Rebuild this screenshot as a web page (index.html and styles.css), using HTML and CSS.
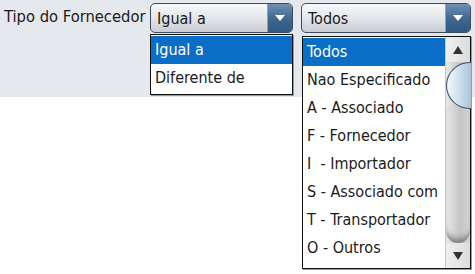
FILE: index.html
```html
<!DOCTYPE html>
<html>
<head>
    <meta name="viewport" content="width=device-width, initial-scale=1.0">
    <title>Tipo do Fornecedor</title>
    <link rel="stylesheet" href="styles.css">
</head>
<body>
    <div class="filter-bar">
        <label class="filter-label">Tipo do Fornecedor</label>
        <div class="combo combo-op">
            <div class="combo-box">
                <span class="combo-value">Igual a</span>
                <span class="combo-btn"></span>
            </div>
            <ul class="combo-list">
                <li class="selected">Igual a</li>
                <li>Diferente de</li>
            </ul>
        </div>
        <div class="combo combo-type">
            <div class="combo-box">
                <span class="combo-value">Todos</span>
                <span class="combo-btn"></span>
            </div>
            <div class="combo-list with-scroll">
                <ul>
                    <li class="selected">Todos</li>
                    <li>Nao Especificado</li>
                    <li>A - Associado</li>
                    <li>F - Fornecedor</li>
                    <li>I &nbsp;- Importador</li>
                    <li>S - Associado com</li>
                    <li>T - Transportador</li>
                    <li>O - Outros</li>
                </ul>
                <div class="scrollbar">
                    <div class="scroll-arrow up"></div>
                    <div class="scroll-thumb"></div>
                    <div class="scroll-track"></div>
                    <div class="scroll-arrow down"></div>
                </div>
            </div>
        </div>
    </div>
</body>
</html>
```

FILE: styles.css
```css
html, body {
    height: 100%;
}
body {
    margin: 0;
    min-height: 274px;
    background: #fff;
    font-family: "DejaVu Sans Condensed", "DejaVu Sans", sans-serif;
    font-stretch: condensed;
    color: #1a1a1a;
}
.filter-bar {
    height: 97px;
    background: #e5e9ee;
    display: flex;
    align-items: flex-start;
    padding: 3px 0 0 4px;
    box-sizing: border-box;
}
.filter-label {
    font-size: 16.4px;
    line-height: 27px;
    width: 146px;
    white-space: nowrap;
}
.combo {
    position: relative;
}
.combo-op {
    width: 143px;
}
.combo-type {
    width: 170px;
    margin-left: 8px;
}
.combo-box {
    height: 30px;
    box-sizing: border-box;
    border: 1px solid #3f4b58;
    border-radius: 5px;
    background: linear-gradient(#f7f8fa, #e3e6ea 50%, #c9cdd3);
    display: flex;
    align-items: center;
    overflow: hidden;
}
.combo-value {
    flex: 1;
    font-size: 16px;
    padding-left: 6px;
}
.combo-btn {
    width: 24px;
    height: 100%;
    background: linear-gradient(#6f8fb3, #3d6690 55%, #2f5882);
    border-left: 1px solid #8fa4ba;
    display: flex;
    align-items: center;
    justify-content: center;
}
.combo-btn::after {
    content: "";
    border-left: 5px solid transparent;
    border-right: 5px solid transparent;
    border-top: 6px solid #fff;
}
.combo-list {
    position: absolute;
    left: 0;
    right: 0;
    top: 31px;
    margin: 0;
    padding: 1px 0 2px;
    list-style: none;
    background: #fff;
    border: 1px solid #111;
    box-shadow: 1px 1px 0 #999;
}
.combo-list ul {
    margin: 0;
    padding: 0;
    list-style: none;
    flex: 1;
}
.combo-list li {
    height: 28px;
    line-height: 28px;
    font-size: 16px;
    padding-left: 4px;
    white-space: nowrap;
}
.combo-list li.selected {
    background: #0a6ec6;
    color: #fff;
}
.combo-type .combo-list {
    top: 33px;
    left: 1px;
    display: flex;
    padding: 1px 0 6px;
}
.scrollbar {
    width: 24px;
    display: flex;
    flex-direction: column;
    margin-top: -1px;
    margin-bottom: -6px;
    background: linear-gradient(90deg, #e8e8e8, #c4c4c4 60%, #d6d6d6);
    border-left: 1px solid #c8c8c8;
}
.scroll-arrow {
    height: 25px;
    display: flex;
    align-items: center;
    justify-content: center;
    background: linear-gradient(90deg, #f0f0f0, #dcdcdc);
}
.scroll-arrow.up::after {
    content: "";
    border-left: 5px solid transparent;
    border-right: 5px solid transparent;
    border-bottom: 8px solid #333;
}
.scroll-arrow.down::after {
    content: "";
    border-left: 5px solid transparent;
    border-right: 5px solid transparent;
    border-top: 8px solid #333;
}
.scroll-thumb {
    height: 45px;
    margin-right: -1px;
    border: 1px solid #3a5066;
    border-right: 0;
    border-radius: 24px 0 0 24px;
    background: linear-gradient(90deg, #f4f8fc, #cfe0ee 50%, #a9c2d8);
}
.scroll-track {
    flex: 1;
    border-radius: 0 0 12px 12px;
    box-shadow: inset 0 -8px 6px -4px #7c7c7c;
}
```
